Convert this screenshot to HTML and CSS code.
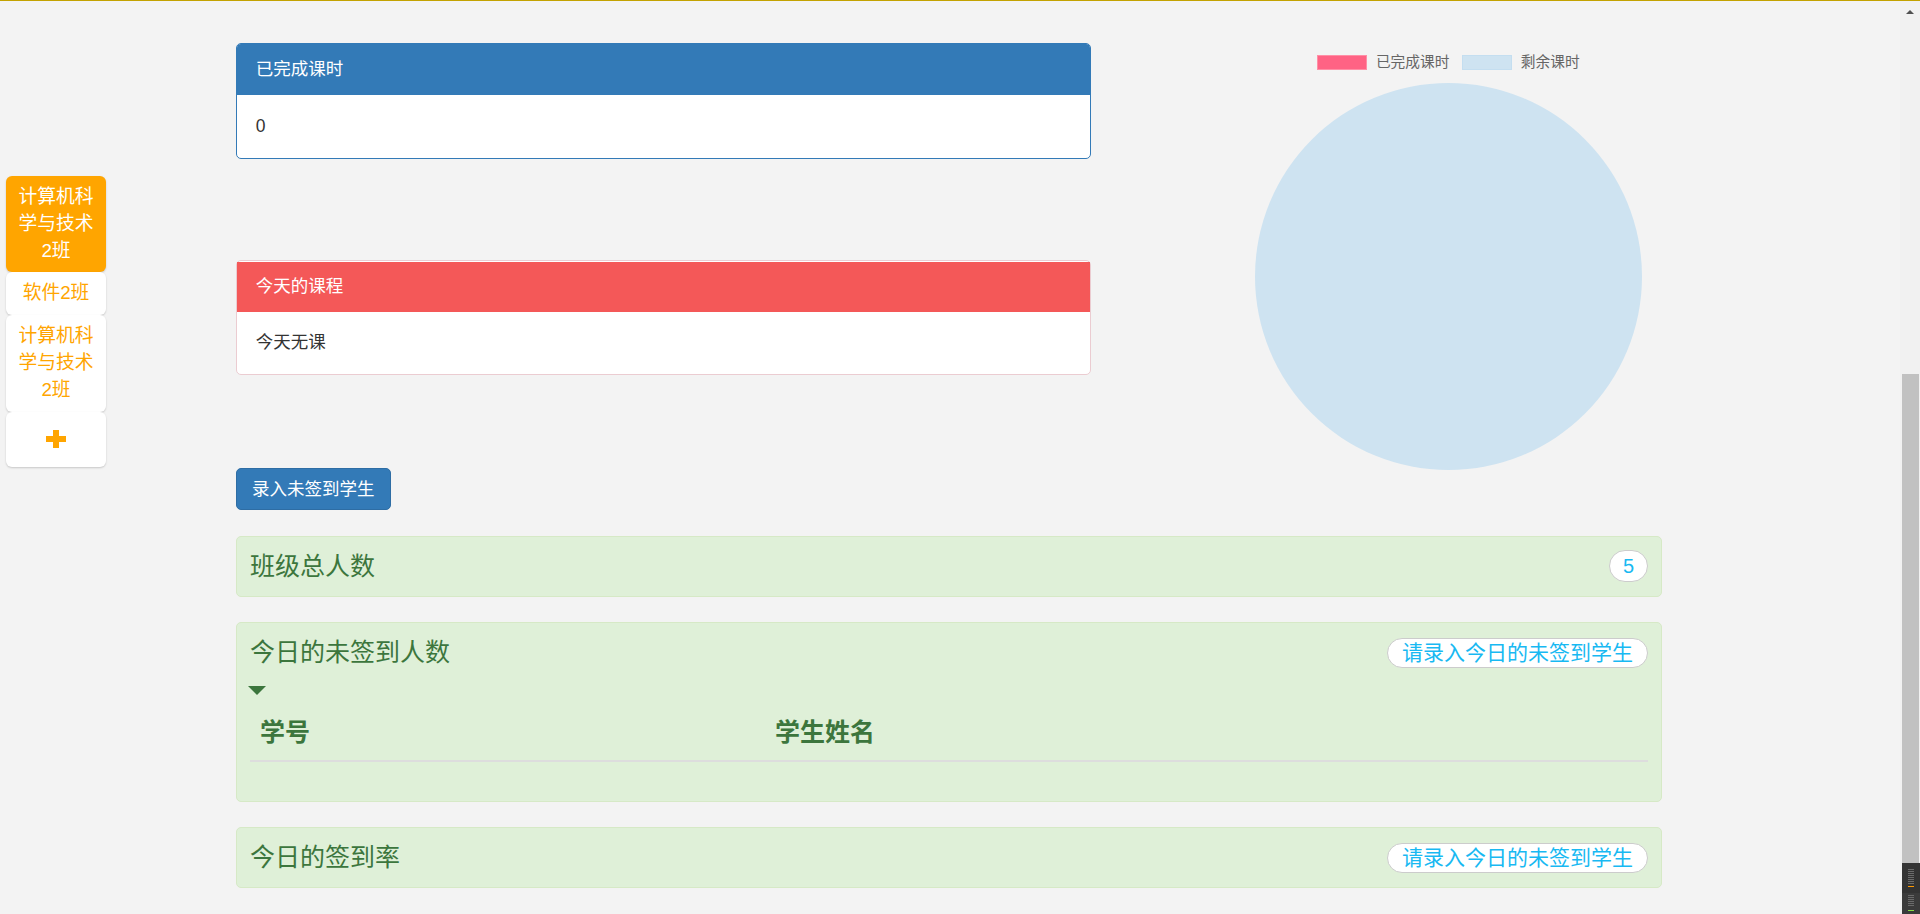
FILE: index.html
```html
<!DOCTYPE html>
<html lang="zh-CN">
<head>
<meta charset="utf-8">
<title>班级概况</title>
<link rel="stylesheet" href="styles.css">
</head>
<body>
<div class="topline"></div>
<div class="frame">
  <div class="page">
    <nav class="sidebar">
      <a class="tab active">计算机科学与技术2班</a>
      <a class="tab">软件2班</a>
      <a class="tab">计算机科学与技术2班</a>
      <a class="tab tab-add">
        <svg class="plus" width="20" height="18" viewBox="0 0 20 18"><path d="M7 0H13V6H20V12H13V18H7V12H0V6H7Z" fill="#ffa500"/></svg>
      </a>
    </nav>
    <main class="main">
      <div class="top-row">
        <div class="left-col">
          <div class="panel panel-primary">
            <div class="panel-heading">已完成课时</div>
            <div class="panel-body">0</div>
          </div>
          <div class="panel panel-danger">
            <div class="panel-heading">今天的课程</div>
            <div class="panel-body">今天无课</div>
          </div>
          <button class="btn">录入未签到学生</button>
        </div>
        <div class="chart-col">
          <div class="legend">
            <span class="legend-item"><span class="box box-done"></span>已完成课时</span>
            <span class="legend-item"><span class="box box-left"></span>剩余课时</span>
          </div>
          <div class="pie"></div>
        </div>
      </div>

      <section class="stat">
        <div class="stat-head">
          <span>班级总人数</span>
          <span class="badge">5</span>
        </div>
      </section>

      <section class="stat">
        <div class="stat-head">
          <span>今日的未签到人数</span>
          <span class="badge badge-wide">请录入今日的未签到学生</span>
        </div>
        <div class="caret"></div>
        <table class="stu-table">
          <thead>
            <tr><th>学号</th><th>学生姓名</th></tr>
          </thead>
          <tbody></tbody>
        </table>
      </section>

      <section class="stat">
        <div class="stat-head">
          <span>今日的签到率</span>
          <span class="badge badge-wide">请录入今日的未签到学生</span>
        </div>
      </section>
    </main>
  </div>
  <div class="scrollbar">
    <div class="sb-arrow"></div>
    <div class="sb-thumb"></div>
    <div class="widget">
      <div class="w-top"><i class="w-lines"></i><i class="w-orange"></i></div>
      <div class="w-bottom"><i class="w-lines short"></i><i class="w-green"></i></div>
    </div>
  </div>
</div>
</body>
</html>
```

FILE: styles.css
```css
* { box-sizing: border-box; }

html, body {
  margin: 0;
  height: 914px;
  overflow: hidden;
}

body {
  background: #f3f3f3;
  color: #333;
  font-family: "Liberation Sans", "Noto Sans CJK SC", sans-serif;
  display: flex;
  flex-direction: column;
}

.topline {
  height: 1px;
  background: #c3a200;
  flex: none;
}

.frame {
  flex: 1;
  display: flex;
  min-height: 0;
}

.page {
  flex: 1;
  display: flex;
  align-items: flex-start;
}

/* sidebar tabs */
.sidebar {
  width: 100px;
  margin: 175px 0 0 6px;
  display: flex;
  flex-direction: column;
}

.tab {
  display: block;
  background: #fff;
  color: #ffa500;
  text-align: center;
  font-size: 18.75px;
  line-height: 26.8px;
  padding: 8px 12.5px;
  border-radius: 6px;
  box-shadow: 0 1px 2px rgba(0, 0, 0, 0.18);
}

.tab.active {
  background: #ffa500;
  color: #fff;
}

.tab-add {
  padding: 18px 0 19px;
}

.plus {
  display: block;
  margin: 0 auto;
}

/* main */
.main {
  width: 1426px;
  margin-left: 130px;
  padding-top: 42px;
}

.top-row {
  display: flex;
  justify-content: space-between;
  align-items: flex-start;
  margin-bottom: 25.5px;
}

.left-col {
  width: 855px;
  display: flex;
  flex-direction: column;
  align-items: flex-start;
}

.panel {
  width: 100%;
  background: #fff;
  border: 1px solid transparent;
  border-radius: 5px;
  font-size: 17.5px;
  line-height: 25px;
}

.panel-heading {
  padding: 12.5px 18.75px;
  border-radius: 4px 4px 0 0;
  color: #fff;
}

.panel-body {
  padding: 18.75px;
}

.panel-primary {
  border-color: #337ab7;
  margin-bottom: 101px;
}

.panel-primary .panel-heading {
  background: #337ab7;
  border-bottom: 1px solid #337ab7;
}

.panel-danger {
  border-color: #ebccd1;
  padding-top: 1px;
  margin-bottom: 93px;
}

.panel-danger .panel-heading {
  background: #f45858;
  border-radius: 0;
}

.btn {
  font-family: inherit;
  font-size: 17.5px;
  line-height: 25px;
  padding: 7.5px 15px;
  color: #fff;
  background: #337ab7;
  border: 1px solid #2e6da4;
  border-radius: 5px;
}

/* chart */
.chart-col {
  width: 427px;
  padding-top: 12px;
  display: flex;
  flex-direction: column;
  align-items: center;
}

.legend {
  display: flex;
  gap: 13px;
  font-size: 14.7px;
  line-height: 15px;
  color: #666;
}

.legend-item {
  display: flex;
  align-items: center;
}

.box {
  width: 50px;
  height: 15px;
  margin-right: 8.5px;
  border: 1px solid;
}

.box-done {
  background: #ff6384;
  border-color: #ff8fa6;
}

.box-left {
  background: #cee3f1;
  border-color: #c4def0;
}

.pie {
  width: 387px;
  height: 387px;
  margin-top: 13px;
  border-radius: 50%;
  background: #cee3f1;
}

/* stat panels */
.stat {
  background: #dff0d8;
  border: 1px solid #d6e9c6;
  border-radius: 5px;
  padding: 12px 13px;
  margin-bottom: 25.5px;
  color: #3c763d;
}

.stat-head {
  display: flex;
  justify-content: space-between;
  align-items: center;
  font-size: 25px;
  line-height: 35px;
}

.badge {
  background: #fff;
  border: 1px solid #ccc;
  border-radius: 16px;
  color: #18b9f2;
  font-size: 20px;
  line-height: 30px;
  padding: 0 13px;
}

.badge-wide {
  font-size: 21px;
  line-height: 28px;
  padding: 0 14px;
  border-radius: 15px;
}

.caret {
  width: 0;
  height: 0;
  margin: 15.5px 0 0 -2px;
  border-left: 9.5px solid transparent;
  border-right: 9.5px solid transparent;
  border-top: 9.5px solid #3c763d;
}

.stu-table {
  width: 100%;
  border-collapse: collapse;
  margin: 10px 0 27px;
}

.stu-table th {
  text-align: left;
  font-weight: bold;
  font-size: 25px;
  line-height: 35px;
  padding: 10px;
  border-bottom: 2px solid #ddd;
}

/* fake browser scrollbar */
.scrollbar {
  width: 20px;
  position: relative;
  background: #f1f1f1;
  display: flex;
  flex-direction: column;
  justify-content: space-between;
  align-items: center;
}

.sb-arrow {
  width: 0;
  height: 0;
  margin-top: 9px;
  border-left: 4.5px solid transparent;
  border-right: 4.5px solid transparent;
  border-bottom: 4.5px solid #505050;
}

.sb-thumb {
  width: 17px;
  height: 540px;
  background: #c1c1c1;
}

.widget {
  position: absolute;
  right: 0;
  bottom: 0;
  width: 18px;
  height: 51px;
  display: flex;
  flex-direction: column;
}

.w-top {
  height: 30px;
  background: #333;
  display: flex;
  flex-direction: column;
  align-items: center;
  padding-top: 6px;
}

.w-bottom {
  flex: 1;
  background: #3b3b3b;
  display: flex;
  flex-direction: column;
  align-items: center;
  padding-top: 2px;
}

.w-lines {
  display: block;
  width: 6px;
  height: 16px;
  background: repeating-linear-gradient(#6a6a6a 0 1px, transparent 1px 2px);
}

.w-lines.short {
  height: 12px;
}

.w-orange {
  display: block;
  width: 6px;
  height: 1px;
  margin-top: 1px;
  background: #ff9900;
}

.w-green {
  display: block;
  width: 6px;
  height: 1px;
  margin-top: 3px;
  background: #88dd44;
}
```
